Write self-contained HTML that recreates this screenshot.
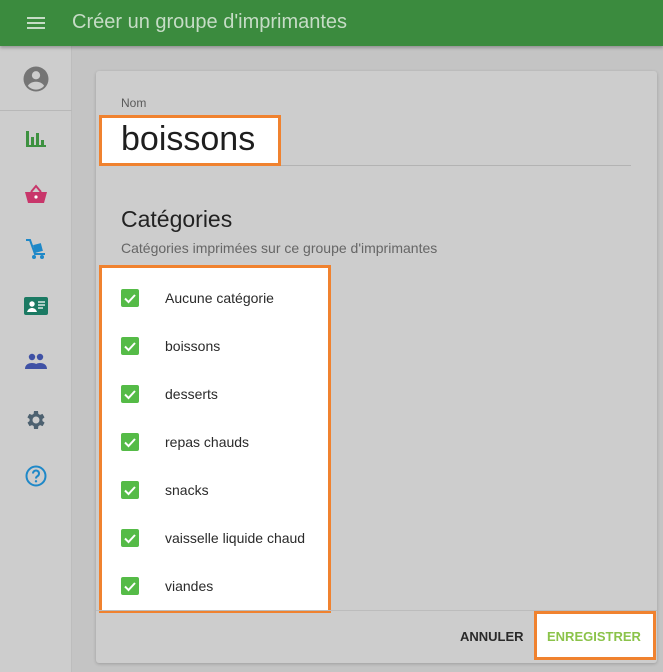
<!DOCTYPE html><html><head><meta charset="utf-8"><style>
*{box-sizing:border-box;margin:0;padding:0}
body{width:663px;height:672px;overflow:hidden;background:#c4c4c4;font-family:"Liberation Sans",Roboto,sans-serif;position:relative}
.hdr{position:absolute;left:0;top:0;width:663px;height:46px;background:#3b8b3e;box-shadow:0 2px 3px rgba(0,0,0,.25);z-index:3}
.hdr .t{position:absolute;left:72px;top:11px;font-size:20px;color:#c6dcc6}
.burger{position:absolute;left:27px;top:17px;width:18px;height:12px;border-top:2px solid #c6dcc6;border-bottom:2px solid #c6dcc6}
.burger:after{content:"";position:absolute;left:0;top:3px;width:18px;height:2px;background:#c6dcc6}
.side{position:absolute;left:0;top:46px;width:72px;height:626px;background:#cdcdcd;border-right:1px solid #bdbdbd}
.side .sep{position:absolute;left:0;top:64px;width:72px;height:1px;background:#b8b8b8}
.ic{position:absolute;left:24px}
.card{position:absolute;left:96px;top:71px;width:561px;height:592px;background:#cdcdcd;border-radius:3px;box-shadow:0 1px 3px rgba(0,0,0,.2)}
.hl{position:absolute;background:#fff;border:3px solid #f0822f}
.lbl{position:absolute;left:121px;top:96px;font-size:12px;color:#5a5a5a}
.line{position:absolute;left:121px;top:165px;width:510px;height:1px;background:#b3b3b3}
.h2{position:absolute;left:121px;top:206px;font-size:23px;color:#222}
.sub{position:absolute;left:121px;top:240px;font-size:14px;color:#666}
.row{position:absolute;left:121px;height:20px}
.cb{position:absolute;left:0;top:0;width:18px;height:18px;background:#55bb47;border-radius:2px}
.row span{position:absolute;left:44px;top:1px;font-size:14px;color:#2a2a2a;white-space:nowrap}
.foot{position:absolute;left:96px;top:610px;width:561px;height:1px;background:#bcbcbc}
.btn{position:absolute;font-size:13px;font-weight:bold;top:629px}
</style></head><body>
<div class="hdr"><div class="burger"></div><div class="t">Créer un groupe d'imprimantes</div></div>
<div class="side">
<svg class="ic" style="top:18px;left:21px" width="30" height="30" viewBox="0 0 24 24"><circle cx="12" cy="12" r="10" fill="#757575"/><circle cx="12" cy="9" r="3.3" fill="#cdcdcd"/><path d="M5.5 17.5c1.5-2.5 4-3.3 6.5-3.3s5 .8 6.5 3.3A8.5 8.5 0 0 1 5.5 17.5z" fill="#cdcdcd"/></svg>
<div class="sep"></div>
<svg class="ic" style="top:82px" width="24" height="22" viewBox="0 0 24 22"><path d="M2 3h3v16H2zM7 9h3v10H7zM12 5h3v14h-3zM17 12h3v7h-3zM2 17h20v2H2z" fill="#3d9140"/></svg>
<svg class="ic" style="top:138px" width="24" height="22" viewBox="0 0 24 22"><path d="M7 8l5-6 5 6" stroke="#c8366a" stroke-width="2" fill="none"/><path d="M1 8h22l-3 11H4z" fill="#c8366a"/><circle cx="12" cy="13" r="1.6" fill="#fff"/></svg>
<svg class="ic" style="top:192px" width="24" height="24" viewBox="0 0 24 24"><path d="M2 2h4l5 14h10" stroke="#1e88c8" stroke-width="2" fill="none"/><rect x="10" y="6" width="8" height="8" fill="#1e88c8" transform="rotate(-15 14 10)"/><circle cx="10" cy="19" r="2" fill="#1e88c8"/><circle cx="18" cy="19" r="2" fill="#1e88c8"/></svg>
<svg class="ic" style="top:250px" width="24" height="20" viewBox="0 0 24 20"><rect x="0" y="1" width="24" height="18" rx="2" fill="#1b7a63"/><circle cx="8" cy="8" r="2.7" fill="#fff"/><path d="M3 16c1-3 3-4 5-4s4 1 5 4z" fill="#fff"/><path d="M14 6h7M14 9h7M14 12h5" stroke="#fff" stroke-width="1.3"/></svg>
<svg class="ic" style="top:306px" width="24" height="18" viewBox="0 0 24 18"><circle cx="8" cy="5" r="3.2" fill="#3f51a5"/><circle cx="16" cy="5" r="3.2" fill="#3f51a5"/><path d="M1 17c0-4 3-6 7-6s7 2 7 6zM13 17c0-2-.5-3.5-1.5-4.5 1-.9 2.7-1.5 4.5-1.5 4 0 7 2 7 6z" fill="#3f51a5"/></svg>
<svg class="ic" style="top:362px" width="24" height="24" viewBox="0 0 24 24"><path fill="#4d6170" d="M19.4 13a7.6 7.6 0 0 0 0-2l2.1-1.6-2-3.5-2.5 1a7 7 0 0 0-1.7-1L15 3h-4l-.4 2.9a7 7 0 0 0-1.7 1l-2.5-1-2 3.5L6.6 11a7.6 7.6 0 0 0 0 2l-2.1 1.6 2 3.5 2.5-1a7 7 0 0 0 1.7 1L11 21h4l.4-2.9a7 7 0 0 0 1.7-1l2.5 1 2-3.5zM13 15.5a3.5 3.5 0 1 1 0-7 3.5 3.5 0 0 1 0 7z" transform="translate(-1 0)"/></svg>
<svg class="ic" style="top:418px" width="24" height="24" viewBox="0 0 24 24"><circle cx="12" cy="12" r="9.5" fill="none" stroke="#1e88c8" stroke-width="2"/><path d="M9 9.5a3 3 0 1 1 4.5 2.6c-1 .6-1.5 1.2-1.5 2.4" stroke="#1e88c8" stroke-width="2" fill="none"/><circle cx="12" cy="17.3" r="1.2" fill="#1e88c8"/></svg>
</div>
<div class="card"></div>
<div class="lbl">Nom</div>
<div class="line"></div>
<div class="hl" style="left:99px;top:115px;width:182px;height:51px"></div>
<div style="position:absolute;left:121px;top:120px;font-size:34px;color:#1e1e1e">boissons</div>
<div class="h2">Catégories</div>
<div class="sub">Catégories imprimées sur ce groupe d'imprimantes</div>
<div class="hl" style="left:99px;top:265px;width:232px;height:348px"></div>
<div class="row" style="top:289px"><div class="cb"><svg width="18" height="18"><path d="M4 9.5l3.5 3.5 6.5-7" stroke="#fff" stroke-width="2" fill="none"/></svg></div><span>Aucune catégorie</span></div>
<div class="row" style="top:337px"><div class="cb"><svg width="18" height="18"><path d="M4 9.5l3.5 3.5 6.5-7" stroke="#fff" stroke-width="2" fill="none"/></svg></div><span>boissons</span></div>
<div class="row" style="top:385px"><div class="cb"><svg width="18" height="18"><path d="M4 9.5l3.5 3.5 6.5-7" stroke="#fff" stroke-width="2" fill="none"/></svg></div><span>desserts</span></div>
<div class="row" style="top:433px"><div class="cb"><svg width="18" height="18"><path d="M4 9.5l3.5 3.5 6.5-7" stroke="#fff" stroke-width="2" fill="none"/></svg></div><span>repas chauds</span></div>
<div class="row" style="top:481px"><div class="cb"><svg width="18" height="18"><path d="M4 9.5l3.5 3.5 6.5-7" stroke="#fff" stroke-width="2" fill="none"/></svg></div><span>snacks</span></div>
<div class="row" style="top:529px"><div class="cb"><svg width="18" height="18"><path d="M4 9.5l3.5 3.5 6.5-7" stroke="#fff" stroke-width="2" fill="none"/></svg></div><span>vaisselle liquide chaud</span></div>
<div class="row" style="top:577px"><div class="cb"><svg width="18" height="18"><path d="M4 9.5l3.5 3.5 6.5-7" stroke="#fff" stroke-width="2" fill="none"/></svg></div><span>viandes</span></div>
<div class="foot"></div>
<div class="btn" style="left:460px;color:#2a2a2a">ANNULER</div>
<div class="hl" style="left:534px;top:611px;width:122px;height:49px"></div>
<div class="btn" style="left:547px;color:#8bc34a">ENREGISTRER</div>
</body></html>
